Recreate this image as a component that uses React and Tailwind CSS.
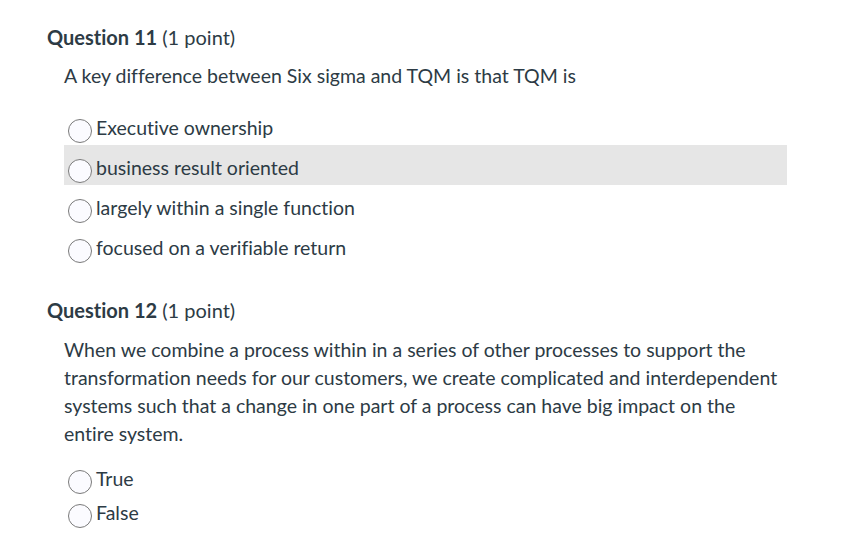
import React from 'react';

const Radio = ({ top }) => (
  <span className={`h-6 w-6 shrink-0 rounded-full border border-[#7a7a7a] bg-[#fbfbff] ${top}`} />
);

const Option = ({ label, highlight, tall = true }) => (
  <div className={`flex items-start gap-[4px] pl-1 ${tall ? 'h-10' : 'h-[34px]'} ${highlight ? 'bg-[#e6e6e6]' : ''}`}>
    <Radio top={tall ? 'mt-[14px]' : 'mt-[8px]'} />
    <span className={`text-[19.5px] leading-[28px] text-[#2d3b45] ${tall ? 'pt-[9px]' : 'pt-[3px]'}`}>{label}</span>
  </div>
);

const Heading = ({ num }) => (
  <h2 className="text-[20px] leading-[28px] text-[#2d3b45]">
    <span className="font-bold">Question {num}</span> (1 point)
  </h2>
);

export default function App() {
  const q11 = [
    'Executive ownership',
    'business result oriented',
    'largely within a single function',
    'focused on a verifiable return',
  ];

  return (
    <div className="min-h-screen bg-white pl-[47px] pt-[23px] font-['Lato',sans-serif] text-[#2d3b45] [font-variant-ligatures:none]">
      {/* Question 11 */}
      <Heading num={11} />
      <div className="ml-[17px] mt-[11px] w-[723px]">
        <p className="text-[19.5px] leading-[28px]">A key difference between Six sigma and TQM is that TQM is</p>
        <div className="mt-[15px]">
          {q11.map((o, i) => (
            <Option key={o} label={o} highlight={i === 1} />
          ))}
        </div>
      </div>

      {/* Question 12 */}
      <div className="mt-[31px]">
        <Heading num={12} />
      </div>
      <div className="ml-[17px] mt-[12px] w-[723px]">
        <p className="text-[19.5px] leading-[28px]">
          When we combine a process within in a series of other processes to support the
          transformation needs for our customers, we create complicated and interdependent
          systems such that a change in one part of a process can have big impact on the
          entire system.
        </p>
        <div className="mt-[14px]">
          <Option label="True" tall={false} />
          <Option label="False" tall={false} />
        </div>
      </div>
    </div>
  );
}
